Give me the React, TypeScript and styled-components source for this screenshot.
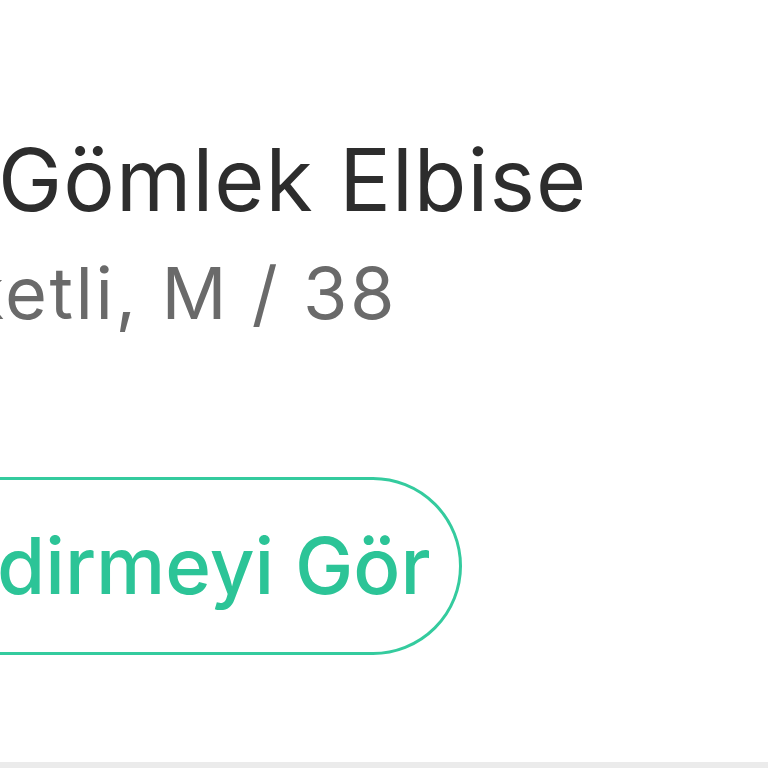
import React from "react";
import styled, { createGlobalStyle } from "styled-components";

const GlobalStyle = createGlobalStyle`
  html, body {
    margin: 0;
    padding: 0;
    background: #ffffff;
  }
  body {
    font-family: Inter, "Noto Sans", sans-serif;
    -webkit-font-smoothing: antialiased;
  }
`;

/* The page is a zoomed viewport onto a product row: the row's left part lies outside it. */
const Viewport = styled.div`
  width: 768px;
  height: 768px;
  overflow: hidden;
  background: #ffffff;
  display: flex;
  flex-direction: column;
`;

const ProductRow = styled.section`
  flex: 1;
  display: flex;
  flex-direction: column;
  align-items: flex-start;
  margin-left: -393.6px;
  padding-top: 128px;
  border-bottom: 6px solid #ebebeb;
`;

const Info = styled.div`
  display: flex;
  flex-direction: column;
  align-items: flex-start;
  gap: 16.5px;
`;

const Title = styled.h2`
  margin: 0;
  font-family: Inter, sans-serif;
  font-weight: 400;
  font-size: 86px;
  line-height: 104px;
  letter-spacing: 1.1px;
  color: #2d2d2d;
  white-space: nowrap;
`;

const Variant = styled.p`
  margin: 0;
  font-family: Inter, sans-serif;
  font-weight: 400;
  font-size: 72px;
  line-height: normal;
  letter-spacing: 2.5px;
  color: #6a6a6a;
  white-space: nowrap;
`;

const OutlineButton = styled.button`
  margin-top: 141.5px;
  height: 178px;
  box-sizing: border-box;
  display: inline-flex;
  align-items: center;
  padding: 0 28.5px 0 47.6px;
  border: 3.5px solid #34cb9e;
  border-radius: 89px;
  background: #ffffff;
  color: #2cc497;
  font-family: Inter, sans-serif;
  font-weight: 500;
  font-size: 78px;
  line-height: 1;
  white-space: nowrap;
  cursor: pointer;
`;

export default function App() {
  return (
    <>
      <GlobalStyle />
      <Viewport>
        <ProductRow>
          <Info>
            <Title>Oversize Gömlek Elbise</Title>
            <Variant>Beyaz, Etiketli, M / 38</Variant>
          </Info>
          <OutlineButton type="button">Değerlendirmeyi Gör</OutlineButton>
        </ProductRow>
      </Viewport>
    </>
  );
}
